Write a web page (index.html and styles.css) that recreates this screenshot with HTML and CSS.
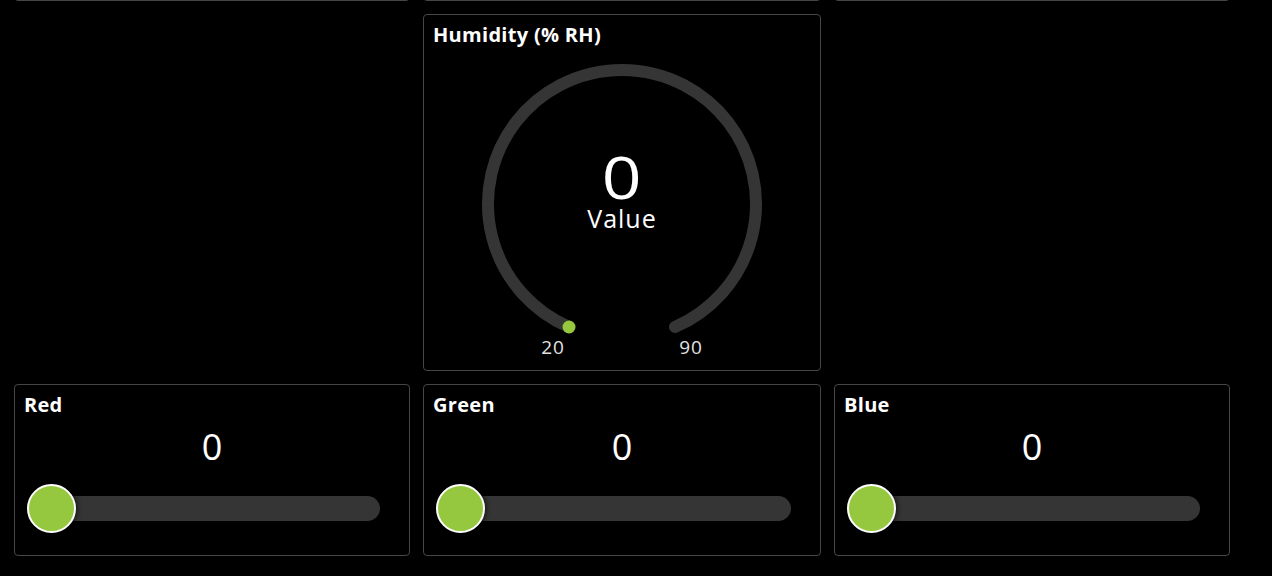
FILE: index.html
```html
<!DOCTYPE html>
<html>
<head>
<meta charset="utf-8">
<link rel="stylesheet" href="styles.css">
</head>
<body>
<div class="grid">
  <div class="card stub"></div>
  <div class="card stub"></div>
  <div class="card stub"></div>

  <div class="card gauge-card">
    <div class="title">Humidity (% RH)</div>
    <div class="gauge-wrap">
      <svg class="gauge" viewBox="0 0 396 320" width="396" height="320">
        <path class="arc" d="M145 278 A134 134 0 1 1 251 278"/>
        <circle class="dot" cx="145" cy="278" r="6.5"/>
        <text class="g-tick" x="129" y="305" text-anchor="middle">20</text>
        <text class="g-tick" x="267" y="305" text-anchor="middle">90</text>
      </svg>
      <div class="g-center">
        <div class="g-value">0</div>
        <div class="g-label">Value</div>
      </div>
    </div>
  </div>

  <div class="card slider-card col1">
    <div class="title">Red</div>
    <div class="s-value">0</div>
    <div class="track"><div class="thumb"></div></div>
  </div>
  <div class="card slider-card">
    <div class="title">Green</div>
    <div class="s-value">0</div>
    <div class="track"><div class="thumb"></div></div>
  </div>
  <div class="card slider-card">
    <div class="title">Blue</div>
    <div class="s-value">0</div>
    <div class="track"><div class="thumb"></div></div>
  </div>
</div>
</body>
</html>
```

FILE: styles.css
```css
* { box-sizing: border-box; }
html, body {
  margin: 0;
  padding: 0;
  background: #000;
  overflow: hidden;
}
body {
  font-family: "Open Sans", Lato, sans-serif;
  color: #fff;
}
.grid {
  display: grid;
  grid-template-columns: repeat(3, 1fr);
  column-gap: 13px;
  row-gap: 13px;
  width: 1230px;
  padding-left: 14px;
  margin-top: -20px;
}
.card {
  border: 1px solid #464646;
  border-radius: 4px;
  background: #000;
}
.stub {
  height: 21px;
}
.gauge-card {
  grid-column: 2;
  height: 357px;
  padding: 8px 0 0 0;
  display: flex;
  flex-direction: column;
}
.title {
  font-size: 20px;
  font-weight: 700;
  line-height: 24px;
  letter-spacing: 0.3px;
  padding-left: 9px;
  color: #fff;
}
.gauge-wrap {
  position: relative;
  margin-top: 2px;
  width: 396px;
  height: 320px;
}
.gauge {
  display: block;
  width: 396px;
  height: 320px;
}
.arc {
  fill: none;
  stroke: #353535;
  stroke-width: 12;
  stroke-linecap: round;
}
.dot { fill: #95c83f; }
.g-tick {
  fill: #e2e2e2;
  font-size: 19px;
  letter-spacing: 1px;
  font-family: "Open Sans", sans-serif;
}
.g-center {
  position: absolute;
  top: 106px;
  left: 0;
  right: 0;
  display: flex;
  flex-direction: column;
  align-items: center;
}
.g-value {
  font-size: 58px;
  line-height: 44px;
  height: 44px;
  font-weight: 400;
  transform: scaleX(1.2);
}
.g-label {
  margin-top: 7px;
  font-size: 25px;
  line-height: 24px;
  letter-spacing: 1px;
}
.slider-card {
  height: 172px;
  padding: 8px 0 0 0;
  display: flex;
  flex-direction: column;
}
.col1 { grid-column: 1; }
.s-value {
  text-align: center;
  font-size: 36px;
  line-height: 40px;
  margin-top: 10px;
  font-weight: 400;
}
.track {
  position: relative;
  height: 25px;
  margin: 29px 29px 0 12px;
  background: #353535;
  border-radius: 13px;
}
.thumb {
  position: absolute;
  left: 0;
  top: -12px;
  width: 49px;
  height: 49px;
  border-radius: 50%;
  background: #95c83f;
  border: 2px solid #fff;
  box-shadow: 2px 0 4px rgba(0,0,0,0.5);
}
```
